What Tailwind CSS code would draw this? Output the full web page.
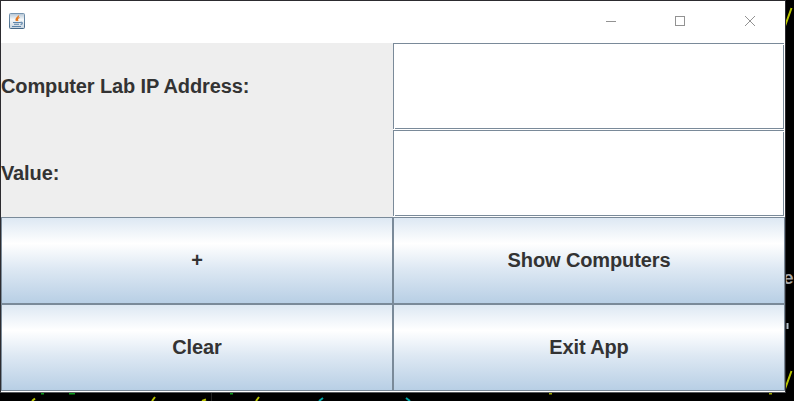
<!DOCTYPE html>
<html lang="en">
<head>
<meta charset="utf-8">
<title>Computer Lab</title>
<script src="https://cdn.jsdelivr.net/npm/@tailwindcss/browser@4"></script>
</head>
<body class="relative w-[794px] h-[401px] overflow-hidden bg-black font-['Liberation_Sans',Arial,sans-serif]">
  <!-- terminal text peeking out around the window -->
  <svg class="absolute inset-0" width="794" height="401" viewBox="0 0 794 401" fill="none">
    <path d="M785 26l6.500-18M785 389l6.500-18" stroke="#b9c400" stroke-width="2"/>
    <path d="M41 393.500h3M69 393.500h6M230 393.500h3" stroke="#0c9c1c" stroke-width="2"/>
    <path d="M549 393.500h3M769 393.500h3" stroke="#a0a800" stroke-width="2"/>
    <path d="M32 401l3-2.500M152 401l3-4M202 401l4-1.500M256 401l3-4" stroke="#b9c400" stroke-width="2"/>
    <path d="M319 401l4-3M406 398l4 3" stroke="#00a8a8" stroke-width="2"/>
    <path d="M787.500 323v6" stroke="#b8c4cc" stroke-width="2"/>
    <path d="M211.500 392v9" stroke="#222"/>
  </svg>
  <span class="absolute left-[783px] top-[270px] text-[18px] leading-[18px] font-bold text-[#a8a8a8] font-['Liberation_Mono',monospace]">e</span>

  <main class="relative flex flex-col w-[786px] h-[393px] border border-[#2c2b2f] border-b-[#55585c] bg-white">
    <header class="flex items-center justify-between h-[42px] shrink-0 pl-2">
      <svg class="mb-0.5" width="16" height="16" viewBox="0 0 16 16" fill="none">
        <defs><linearGradient id="tile" x2="0" y2="1"><stop stop-color="#7795b0"/><stop offset="1" stop-color="#456888"/></linearGradient>
        <linearGradient id="face" x2="0" y2="1"><stop stop-color="#b4c5d4"/><stop offset=".4" stop-color="#f5f8fa"/><stop offset="1" stop-color="#c5d2de"/></linearGradient></defs>
        <rect x=".5" y=".5" width="15" height="15" rx="1" fill="url(#face)" stroke="url(#tile)"/>
        <path d="M9.500 2.500C10 4.500 5.500 5 7.500 8M10.500 4.500C8 5.500 8 6.500 9 8" stroke="#e5781e" stroke-width="1.300"/>
        <path d="M4 9.500h7M5 11.300h5M3 13.500h9M11 9.500c3-1 3 1.500.5 2" stroke="#5b83a8" stroke-width="1.100"/>
      </svg>
      <div class="flex">
        <svg width="69" height="42" viewBox="0 0 69 42" stroke="#929292" fill="none"><path d="M29 20.500h10"/></svg>
        <svg width="70" height="42" viewBox="0 0 70 42" stroke="#929292" fill="none"><rect x="29.500" y="15.500" width="9" height="9"/></svg>
        <svg width="69" height="42" viewBox="0 0 69 42" stroke="#929292" fill="none"><path d="M29 15l10 10M39 15L29 25"/></svg>
      </div>
    </header>

    <div class="grid grid-cols-2 auto-rows-[87px] text-[20px] font-bold tracking-[-0.12px] text-[#333]">
      <label for="ip" class="flex items-center pb-0.5 bg-[#eee] whitespace-nowrap">Computer Lab IP Address:</label>
      <div class="relative pr-px pb-px"><input id="ip" class="block w-full h-full bg-white border border-[#7a8a99] rounded-none outline-none"><i class="absolute left-px bottom-px size-px bg-white"></i><i class="absolute right-px top-px size-px bg-white"></i></div>
      <label for="value" class="flex items-center pb-0.5 bg-[#eee]">Value:</label>
      <div class="relative pr-px pb-px"><input id="value" class="block w-full h-full bg-white border border-[#7a8a99] rounded-none outline-none"><i class="absolute left-px bottom-px size-px bg-white"></i><i class="absolute right-px top-px size-px bg-white"></i></div>
      <button class="pb-0.5 border border-[#7a8a99] bg-[linear-gradient(#dde8f3_0%,#fff_30%,#dde8f3_60%,#b8cfe5_100%)]">+</button>
      <button class="pb-0.5 border border-[#7a8a99] bg-[linear-gradient(#dde8f3_0%,#fff_30%,#dde8f3_60%,#b8cfe5_100%)]">Show Computers</button>
      <button class="pb-0.5 border border-[#7a8a99] bg-[linear-gradient(#dde8f3_0%,#fff_30%,#dde8f3_60%,#b8cfe5_100%)]">Clear</button>
      <button class="pb-0.5 border border-[#7a8a99] bg-[linear-gradient(#dde8f3_0%,#fff_30%,#dde8f3_60%,#b8cfe5_100%)]">Exit App</button>
    </div>
  </main>
</body>
</html>
